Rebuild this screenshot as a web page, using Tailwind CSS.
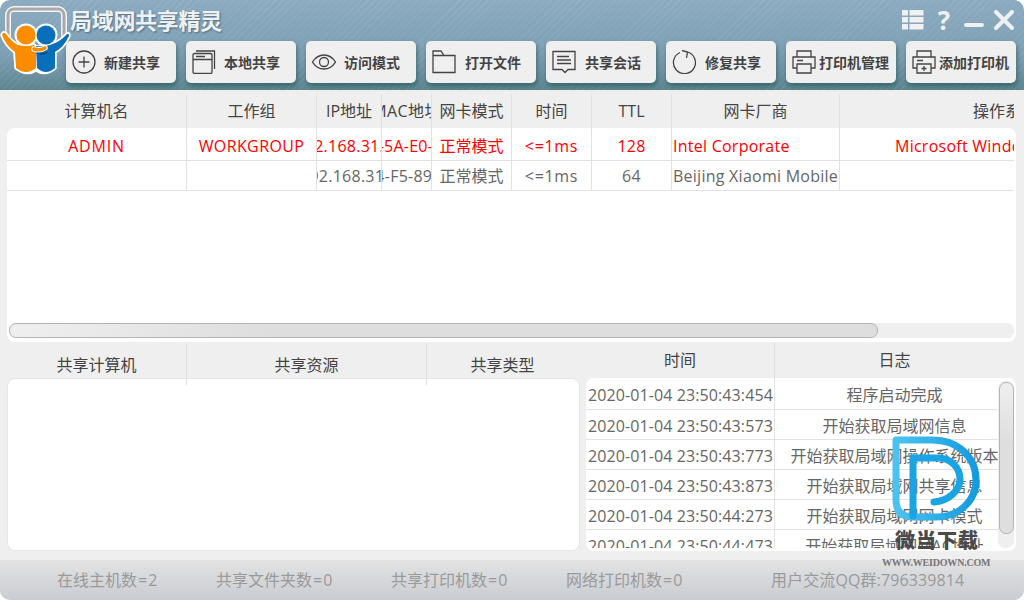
<!DOCTYPE html>
<html lang="en">
<head>
  <meta charset="UTF-8" />
  <title>局域网共享精灵</title>
  <script src="https://cdn.jsdelivr.net/npm/@tailwindcss/browser@4"></script>
</head>
<body class="w-[1024px] h-[600px] overflow-hidden bg-white font-['Open_Sans','Noto_Sans_CJK_SC',sans-serif] text-[16px] text-[#444]">
<div class="relative w-[1024px] h-[600px] flex flex-col bg-[#efefef] rounded-[10px] overflow-hidden">

  <!-- title bar -->
  <header class="relative h-[90px] shrink-0 bg-[repeating-linear-gradient(135deg,rgba(255,255,255,0.06)_0px,rgba(255,255,255,0.06)_1px,transparent_1px,transparent_5px),linear-gradient(180deg,#8cabc0_0%,#7e9fb4_60%,#5d8590_100%)] pt-[5px]">
    <div class="h-[30px] mb-[6px] flex items-center justify-between pl-[70px] pr-[10px]">
      <div class="text-[22px] leading-[32px] font-bold tracking-[-0.3px] text-[#eef2f5] [text-shadow:1px_1px_2px_rgba(60,80,95,0.7)]">局域网共享精灵</div>
      <div class="flex items-center gap-[10px]">
        <svg width="22" height="22" viewBox="0 0 22 22" fill="#eef0f1"><rect x="0" y="1" width="6" height="5.500"/><rect x="7.500" y="1" width="14" height="5.500"/><rect x="0" y="8" width="6" height="5.500"/><rect x="7.500" y="8" width="14" height="5.500"/><rect x="0" y="15" width="6" height="5.500"/><rect x="7.500" y="15" width="14" height="5.500"/></svg>
        <span class="ml-[2px] w-[16px] text-center text-[26px] leading-[26px] font-bold text-[#eef0f1]">?</span>
        <svg width="20" height="22" viewBox="0 0 20 22" class="ml-[2px]"><rect x="0" y="14" width="20" height="4" rx="2" fill="#eef0f1"/></svg>
        <svg width="20" height="20" viewBox="0 0 20 20" stroke="#eef0f1" stroke-width="4" stroke-linecap="round"><path d="M2 2L18 18M18 2L2 18"/></svg>
      </div>
    </div>

    <nav class="flex gap-[10px] pl-[66px]">
      <button class="w-[110px] h-[42px] rounded-[5px] bg-[#efefef] shadow-[1px_3px_5px_rgba(40,90,90,0.75)] flex items-center pl-[6px] text-[14px] font-bold text-[#444]">
        <svg class="w-[24px] h-[24px] shrink-0" viewBox="0 0 24 24" fill="none" stroke="#444" stroke-width="1.300"><circle cx="12" cy="12" r="11"/><path d="M12 6.500v11M6.500 12h11"/></svg>
        <span class="ml-[8px]">新建共享</span>
      </button>
      <button class="w-[110px] h-[42px] rounded-[5px] bg-[#efefef] shadow-[1px_3px_5px_rgba(40,90,90,0.75)] flex items-center pl-[6px] text-[14px] font-bold text-[#444]">
        <svg class="w-[24px] h-[24px] shrink-0" viewBox="0 0 24 24" fill="none" stroke="#444" stroke-width="1.300"><rect x="1" y="3.500" width="19" height="20" rx="1.500"/><path d="M1 9.500h19M4 6.500h9M4 1h18.500v18"/></svg>
        <span class="ml-[8px]">本地共享</span>
      </button>
      <button class="w-[110px] h-[42px] rounded-[5px] bg-[#efefef] shadow-[1px_3px_5px_rgba(40,90,90,0.75)] flex items-center pl-[6px] text-[14px] font-bold text-[#444]">
        <svg class="w-[24px] h-[24px] shrink-0" viewBox="0 0 24 24" fill="none" stroke="#444" stroke-width="1.300"><path d="M0.500 12C4 6.500 8 5 12 5s8 1.500 11.500 7C20 17.500 16 19 12 19S4 17.500 0.500 12Z"/><circle cx="12" cy="12" r="4.500"/></svg>
        <span class="ml-[8px]">访问模式</span>
      </button>
      <button class="w-[110px] h-[42px] rounded-[5px] bg-[#efefef] shadow-[1px_3px_5px_rgba(40,90,90,0.75)] flex items-center pl-[6px] text-[14px] font-bold text-[#444]">
        <svg class="w-[24px] h-[24px] shrink-0" viewBox="0 0 24 24" fill="none" stroke="#444" stroke-width="1.300"><path d="M1 22.500V1h8l3 4.500h11v17ZM1 5.500h11"/></svg>
        <span class="ml-[9px]">打开文件</span>
      </button>
      <button class="w-[110px] h-[42px] rounded-[5px] bg-[#efefef] shadow-[1px_3px_5px_rgba(40,90,90,0.75)] flex items-center pl-[6px] text-[14px] font-bold text-[#444]">
        <svg class="w-[24px] h-[24px] shrink-0" viewBox="0 0 24 24" fill="none" stroke="#444" stroke-width="1.300"><path d="M1 1.500h22v18h-7l-3 3-3-3H1ZM5 6.500h12M5 10h14M5 13.500h14"/></svg>
        <span class="ml-[9px]">共享会话</span>
      </button>
      <button class="w-[110px] h-[42px] rounded-[5px] bg-[#efefef] shadow-[1px_3px_5px_rgba(40,90,90,0.75)] flex items-center pl-[6px] text-[14px] font-bold text-[#444]">
        <svg class="w-[24px] h-[24px] shrink-0" viewBox="0 0 24 24" fill="none" stroke="#444" stroke-width="1.300"><path d="M8 2.500A11 11 0 1 0 15.500 2M15.500 2 10 0.500M15.500 2 14.500 8"/></svg>
        <span class="ml-[9px]">修复共享</span>
      </button>
      <button class="w-[110px] h-[42px] rounded-[5px] bg-[#efefef] shadow-[1px_3px_5px_rgba(40,90,90,0.75)] flex items-center pl-[6px] text-[14px] font-bold text-[#444]">
        <svg class="w-[24px] h-[24px] shrink-0" viewBox="0 0 24 24" fill="none" stroke="#444" stroke-width="1.300"><path d="M5 7V1h14v6M5 18H1V7h22v11h-4M5 14h14v9H5ZM5 10.500h6"/></svg>
        <span class="ml-[3px]">打印机管理</span>
      </button>
      <button class="w-[110px] h-[42px] rounded-[5px] bg-[#efefef] shadow-[1px_3px_5px_rgba(40,90,90,0.75)] flex items-center pl-[6px] text-[14px] font-bold text-[#444]">
        <svg class="w-[24px] h-[24px] shrink-0" viewBox="0 0 24 24" fill="none" stroke="#444" stroke-width="1.300"><path d="M5 7V1h14v6M5 18H1V7h22v11h-4M5 14h14v9H5ZM5 10.500h6M12 16v5M9.500 18.500h5"/></svg>
        <span class="ml-[3px]">添加打印机</span>
      </button>
    </nav>
  </header>

  <!-- logo over the title bar -->
  <svg class="absolute left-0 top-0" width="72" height="78" viewBox="0 0 72 78" fill="none">
    <path d="M8 44V15a6 6 0 0 1 6-6H58a6 6 0 0 1 6 6V44" stroke="#f4f4f4" stroke-width="6"/>
    <path d="M8 44V15a6 6 0 0 1 6-6H58a6 6 0 0 1 6 6V44" stroke="#a9a9a9" stroke-width="3"/>
    <path d="M2 35Q3 31 6 34Q12 42 18 45Q26 47 34 45L36 47Q44 47 50 45Q60 42 66 35Q69 32 69 36Q64 47 55 52V68Q46 76 36 70Q26 76 16 68L15 52Q6 46 2 35Z" fill="#fff" stroke="#fff" stroke-width="3.500" stroke-linejoin="round"/>
    <circle cx="26" cy="35" r="11.500" fill="#fff"/>
    <circle cx="46" cy="35" r="11.500" fill="#fff"/>
    <path d="M36 46Q44 47 50 45Q60 42 66 35Q69 32 69 36Q64 47 55 52V68Q46 76 37 68Z" fill="#0a6fbb"/>
    <circle cx="46" cy="35" r="9.500" fill="#0a6fbb"/>
    <path d="M37 52Q42 55 47 52" stroke="#075694" stroke-width="3"/>
    <path d="M2 35Q3 31 6 34Q12 42 18 45Q26 47 34 45L36 48V68Q26 76 16 68L15 52Q6 46 2 35Z" fill="#fb8c00"/>
    <path d="M34 49Q40 51 45 48" stroke="#fff" stroke-width="5.500" stroke-linecap="round"/>
    <path d="M34 49Q40 51 45 48" stroke="#fb8c00" stroke-width="3.500" stroke-linecap="round"/>
    <circle cx="26" cy="35" r="9.500" fill="#fb8c00"/>
  </svg>

  <!-- hosts table -->
  <section class="mt-[3px] h-[35px] pt-[1px] flex shrink-0 ml-[7px] w-[1007px] overflow-hidden">
    <div class="w-[180px] shrink-0 border-r border-[#e0e0e0] flex justify-center items-center whitespace-nowrap overflow-hidden">计算机名</div>
    <div class="w-[130px] shrink-0 border-r border-[#e0e0e0] flex justify-center items-center whitespace-nowrap overflow-hidden">工作组</div>
    <div class="w-[65px] shrink-0 border-r border-[#e0e0e0] flex justify-center items-center whitespace-nowrap overflow-hidden">IP地址</div>
    <div class="w-[50px] shrink-0 border-r border-[#e0e0e0] flex justify-center items-center whitespace-nowrap overflow-hidden"><span class="shrink-0 tracking-[0.4px]">MAC地址</span></div>
    <div class="w-[80px] shrink-0 border-r border-[#e0e0e0] flex justify-center items-center whitespace-nowrap overflow-hidden">网卡模式</div>
    <div class="w-[80px] shrink-0 border-r border-[#e0e0e0] flex justify-center items-center whitespace-nowrap overflow-hidden">时间</div>
    <div class="w-[80px] shrink-0 border-r border-[#e0e0e0] flex justify-center items-center whitespace-nowrap overflow-hidden">TTL</div>
    <div class="w-[168px] shrink-0 border-r border-[#e0e0e0] flex justify-center items-center whitespace-nowrap overflow-hidden">网卡厂商</div>
    <div class="w-[174px] shrink-0 flex items-center whitespace-nowrap overflow-hidden"><span class="shrink-0 w-[330px] text-center">操作系统</span></div>
  </section>

  <section class="ml-[7px] w-[1009px] h-[214px] shrink-0 bg-white rounded-[8px] flex flex-col overflow-hidden">
    <div class="flex w-[1007px] h-[33px] shrink-0 border-b border-[#e2e2e2] text-[#ff0000] tracking-[0.25px]">
      <div class="w-[180px] shrink-0 border-r border-[#e2e2e2] flex justify-center items-center pt-[3px] whitespace-nowrap overflow-hidden tracking-[0.8px]">ADMIN</div>
      <div class="w-[130px] shrink-0 border-r border-[#e2e2e2] flex justify-center items-center pt-[3px] whitespace-nowrap overflow-hidden tracking-[0.4px]">WORKGROUP</div>
      <div class="w-[65px] shrink-0 border-r border-[#e2e2e2] flex justify-center items-center pt-[3px] whitespace-nowrap overflow-hidden"><span class="shrink-0">192.168.31.23</span></div>
      <div class="w-[50px] shrink-0 border-r border-[#e2e2e2] flex justify-center items-center pt-[3px] whitespace-nowrap overflow-hidden"><span class="shrink-0">E8-5A-E0-4C</span></div>
      <div class="w-[80px] shrink-0 border-r border-[#e2e2e2] flex justify-center items-center pt-[3px] whitespace-nowrap overflow-hidden tracking-normal">正常模式</div>
      <div class="w-[80px] shrink-0 border-r border-[#e2e2e2] flex justify-center items-center pt-[3px] whitespace-nowrap overflow-hidden tracking-[0.7px]">&lt;=1ms</div>
      <div class="w-[80px] shrink-0 border-r border-[#e2e2e2] flex justify-center items-center pt-[3px] whitespace-nowrap overflow-hidden">128</div>
      <div class="w-[168px] shrink-0 border-r border-[#e2e2e2] flex items-center pt-[3px] whitespace-nowrap overflow-hidden pl-[1px]">Intel Corporate</div>
      <div class="w-[174px] shrink-0 flex items-center pt-[3px] whitespace-nowrap overflow-hidden pl-[55px]"><span class="shrink-0">Microsoft Windows 10</span></div>
    </div>
    <div class="flex w-[1007px] h-[30px] shrink-0 border-b border-[#e2e2e2] text-[#666] tracking-[0.25px]">
      <div class="w-[180px] shrink-0 border-r border-[#e2e2e2]"></div>
      <div class="w-[130px] shrink-0 border-r border-[#e2e2e2]"></div>
      <div class="w-[65px] shrink-0 border-r border-[#e2e2e2] flex justify-center items-center pt-[1px] whitespace-nowrap overflow-hidden"><span class="shrink-0">192.168.31.1</span></div>
      <div class="w-[50px] shrink-0 border-r border-[#e2e2e2] flex justify-center items-center pt-[1px] whitespace-nowrap overflow-hidden"><span class="shrink-0">64-F5-89-2</span></div>
      <div class="w-[80px] shrink-0 border-r border-[#e2e2e2] flex justify-center items-center pt-[1px] whitespace-nowrap overflow-hidden tracking-normal">正常模式</div>
      <div class="w-[80px] shrink-0 border-r border-[#e2e2e2] flex justify-center items-center pt-[1px] whitespace-nowrap overflow-hidden tracking-[0.7px]">&lt;=1ms</div>
      <div class="w-[80px] shrink-0 border-r border-[#e2e2e2] flex justify-center items-center pt-[1px] whitespace-nowrap overflow-hidden">64</div>
      <div class="w-[168px] shrink-0 border-r border-[#e2e2e2] flex items-center pt-[1px] whitespace-nowrap overflow-hidden pl-[1px]">Beijing Xiaomi Mobile</div>
      <div class="w-[174px] shrink-0"></div>
    </div>
    <div class="flex-1"></div>
    <div class="h-[15px] mx-[2px] mb-[4px] shrink-0 bg-[#efefef] rounded-[7px]">
      <div class="w-[869px] h-[15px] rounded-[7px] border border-[#b4b4b4] bg-[linear-gradient(90deg,#efefef,#dedede_30%,#dedede)]"></div>
    </div>
  </section>

  <!-- lower panels -->
  <div class="flex-1 min-h-0 flex pl-[7px] pr-[8px] gap-[6px]">
    <div class="w-[573px] shrink-0 flex flex-col">
      <div class="relative z-10 h-[43px] pt-[1px] flex shrink-0">
        <div class="w-[180px] border-r border-[#e0e0e0] flex justify-center items-start pt-[10px]">共享计算机</div>
        <div class="w-[240px] border-r border-[#e0e0e0] flex justify-center items-start pt-[10px]">共享资源</div>
        <div class="flex-1 flex justify-center items-start pt-[10px] pr-[2px]">共享类型</div>
      </div>
      <div class="-mt-[7px] h-[173px] shrink-0 bg-white rounded-[8px] border border-[#e6e6e6]"></div>
    </div>

    <div class="flex-1 min-w-0 flex flex-col">
      <div class="h-[36px] flex shrink-0">
        <div class="w-[189px] border-r border-[#e0e0e0] flex justify-center items-center">时间</div>
        <div class="w-[239px] flex justify-center items-center">日志</div>
      </div>
      <div class="relative h-[173px] shrink-0 bg-white rounded-[8px] overflow-hidden pb-[3px]">
        <div class="h-full w-[412px] overflow-hidden text-[#666]">
          <div class="flex h-[32px] border-b border-[#e2e2e2]"><div class="w-[189px] shrink-0 border-r border-[#e2e2e2] flex items-center pl-[2px] pt-[3px] whitespace-nowrap tracking-[0.1px]">2020-01-04 23:50:43:454</div><div class="w-[239px] shrink-0 flex justify-center items-center pt-[3px] whitespace-nowrap">程序启动完成</div></div>
          <div class="flex h-[30px] border-b border-[#e2e2e2]"><div class="w-[189px] shrink-0 border-r border-[#e2e2e2] flex items-center pl-[2px] pt-[2px] whitespace-nowrap tracking-[0.1px]">2020-01-04 23:50:43:573</div><div class="w-[239px] shrink-0 flex justify-center items-center pt-[2px] whitespace-nowrap">开始获取局域网信息</div></div>
          <div class="flex h-[30px] border-b border-[#e2e2e2]"><div class="w-[189px] shrink-0 border-r border-[#e2e2e2] flex items-center pl-[2px] pt-[2px] whitespace-nowrap tracking-[0.1px]">2020-01-04 23:50:43:773</div><div class="w-[239px] shrink-0 flex justify-center items-center pt-[2px] whitespace-nowrap">开始获取局域网操作系统版本</div></div>
          <div class="flex h-[30px] border-b border-[#e2e2e2]"><div class="w-[189px] shrink-0 border-r border-[#e2e2e2] flex items-center pl-[2px] pt-[2px] whitespace-nowrap tracking-[0.1px]">2020-01-04 23:50:43:873</div><div class="w-[239px] shrink-0 flex justify-center items-center pt-[2px] whitespace-nowrap">开始获取局域网共享信息</div></div>
          <div class="flex h-[30px] border-b border-[#e2e2e2]"><div class="w-[189px] shrink-0 border-r border-[#e2e2e2] flex items-center pl-[2px] pt-[2px] whitespace-nowrap tracking-[0.1px]">2020-01-04 23:50:44:273</div><div class="w-[239px] shrink-0 flex justify-center items-center pt-[2px] whitespace-nowrap">开始获取局域网网卡模式</div></div>
          <div class="flex h-[30px]"><div class="w-[189px] shrink-0 border-r border-[#e2e2e2] flex items-center pl-[2px] pt-[2px] whitespace-nowrap tracking-[0.1px]">2020-01-04 23:50:44:473</div><div class="w-[239px] shrink-0 flex justify-center items-center pt-[2px] whitespace-nowrap">开始获取局域网MAC地址</div></div>
        </div>
        <!-- scrollbar lies over the log column -->
        <div class="absolute right-[2px] top-[3px] bottom-[3px] w-[16px] bg-[#efefef] rounded-[7px]">
          <div class="ml-[1px] mt-[1px] w-[15px] h-[152px] rounded-[7px] border border-[#b4b4b4] bg-[linear-gradient(180deg,#efefef,#dedede_40%,#dedede)]"></div>
        </div>
      </div>
    </div>
  </div>

  <!-- status bar -->
  <footer class="h-[40px] shrink-0 bg-[linear-gradient(180deg,#e2e2e2,#c9ccd1)] flex items-center text-[#9a9a9a] whitespace-nowrap">
    <span class="ml-[57px] w-[159px]">在线主机数<span class="mx-[1px]">=</span>2</span>
    <span class="w-[175px]">共享文件夹数<span class="mx-[1px]">=</span>0</span>
    <span class="w-[175px]">共享打印机数<span class="mx-[1px]">=</span>0</span>
    <span class="w-[205px]">网络打印机数<span class="mx-[1px]">=</span>0</span>
    <span class="tracking-[0.1px]">用户交流QQ群:796339814</span>
  </footer>

  <!-- watermark -->
  <div class="absolute left-[880px] top-[430px] w-[112px] flex flex-col items-center">
    <svg class="ml-[8px] mr-auto" width="96" height="96" viewBox="0 0 96 96" fill="none">
      <defs><linearGradient id="wm" x1="0" y1="0" x2="1" y2="0"><stop offset="0" stop-color="#4cc2f1"/><stop offset="1" stop-color="#149bdf"/></linearGradient></defs>
      <path d="M8 10H44C70 10 88 27 88 50C88 72 70 87 48 87H25Q8 87 8 70Z" stroke="url(#wm)" stroke-width="7" stroke-linejoin="round"/>
      <path d="M25 86V28H50C63 28 72 38 72 49C72 61 60 71 46 72" stroke="#1ba4e4" stroke-width="7" stroke-linecap="round"/>
    </svg>
    <div class="mt-[3px] ml-[15px] mr-auto text-[20px] leading-[24px] font-black text-[#4a4a4a] tracking-[1px]">微当下载</div>
    <div class="mt-[4px] ml-[2px] mr-auto font-['Liberation_Serif',serif] text-[10px] leading-[12px] font-bold tracking-[-0.2px] text-[#777]">WWW.WEIDOWN.COM</div>
  </div>
</div>
</body>
</html>
